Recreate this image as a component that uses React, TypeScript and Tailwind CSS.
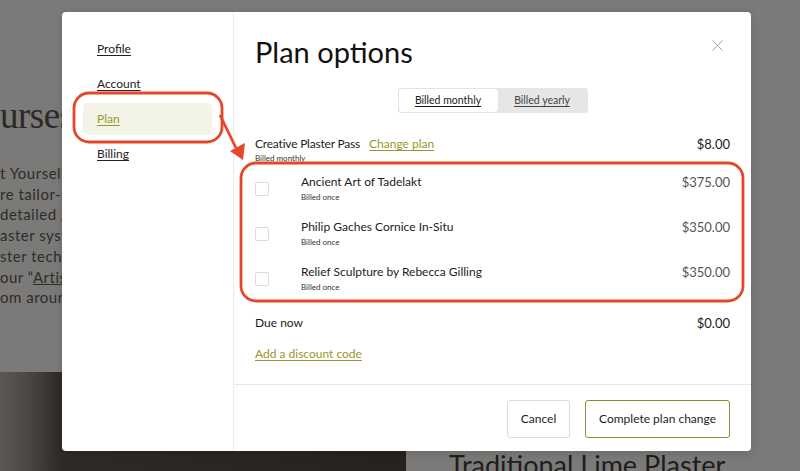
import { X } from 'lucide-react';

const items = [
  { title: 'Ancient Art of Tadelakt', price: '$375.00' },
  { title: 'Philip Gaches Cornice In-Situ', price: '$350.00' },
  { title: 'Relief Sculpture by Rebecca Gilling', price: '$350.00' },
];

const nav = ['Profile', 'Account', 'Plan', 'Billing'];

const pageLines = [
  't Yourself at home',
  're tailor-made',
  'detailed guides',
  'aster systems',
  'ster techniques',
  'our “Artisan”',
  'om around',
];

export default function App() {
  return (
    <div className="relative h-[471px] w-[800px] overflow-hidden bg-[#7b7a78] font-['Lato',sans-serif] text-[#1c1c1c]">
      {/* page underneath the overlay */}
      <div className="flex h-full flex-col">
        <h1 className="pt-[94px] font-['Liberation_Serif',serif] text-[37px] leading-[44px] tracking-[-0.5px] text-[#2a2927]">
          urses
        </h1>
        <div className="mt-[25px] flex flex-col text-[15px] leading-[20.7px] tracking-[0.5px] text-[#2d2c2a]">
          {pageLines.map((l, i) => (
            <span key={i} className="whitespace-nowrap">
              {i === 5 ? (
                <>
                  our “<span className="underline">Artisan</span>”
                </>
              ) : (
                l
              )}
            </span>
          ))}
        </div>
        <div className="mt-auto flex h-[99px]">
          <div className="w-[406px] bg-[linear-gradient(90deg,#5a5855_0px,#4a4744_28px,#2e2a27_60px,#26221f_100%)]" />
          <div className="whitespace-nowrap pl-[43px] pt-[75px] text-[27px] leading-[36px] text-[#1e1d1c]">
            Traditional Lime Plaster
          </div>
        </div>
      </div>

      {/* modal */}
      <div className="absolute left-[62px] top-[12px] flex h-[439px] w-[689px] overflow-hidden rounded-[4px] bg-white shadow-[0_2px_10px_rgba(0,0,0,0.15)]">
        <nav className="flex w-[172px] flex-col gap-[3px] border-r border-[#ececec] px-[21px] pt-[21px]">
          {nav.map((n) => (
            <a
              key={n}
              className={
                'flex h-[32px] items-center rounded-[5px] px-[14px] text-[12px] underline underline-offset-2 ' +
                (n === 'Plan' ? 'bg-[#f4f3e8] text-[#97972c]' : 'text-[#222]')
              }
            >
              {n}
            </a>
          ))}
        </nav>

        <div className="relative flex flex-1 flex-col">
          <button className="absolute right-[24px] top-[24px] text-[#9a9a9a]">
            <X size={19} strokeWidth={1.2} />
          </button>
          <div className="px-[21px]">
            <h2 className="pt-[22px] text-[29px] leading-[36px] text-[#111]">Plan options</h2>

            <div className="mt-[18px] flex justify-center">
              <div className="flex h-[25px] rounded-[3px] bg-[#e6e6e6] p-[1px] text-[10.5px]">
                <span className="flex w-[99px] items-center justify-center rounded-[3px] bg-white underline underline-offset-2 shadow-[0_0_1px_rgba(0,0,0,0.15)]">
                  Billed monthly
                </span>
                <span className="flex w-[89px] items-center justify-center text-[#444] underline underline-offset-2">
                  Billed yearly
                </span>
              </div>
            </div>

            <div className="mt-[23px] flex items-start justify-between">
              <div>
                <div className="flex text-[12px] leading-[16px]">
                  <span className="tracking-[-0.2px]">Creative Plaster Pass</span>
                  <a className="ml-[9px] text-[#97972c] underline underline-offset-2">Change plan</a>
                </div>
                <div className="mt-[1px] text-[8px] leading-[10px] text-[#333]">Billed monthly</div>
              </div>
              <span className="text-[13px] leading-[16px]">$8.00</span>
            </div>

            <div className="mt-[11px] flex flex-col gap-[17px]">
              {items.map((it) => (
                <div key={it.title} className="flex items-start">
                  <span className="mt-[8px] h-[14px] w-[14px] rounded-[2px] border border-[#dcdcdc] bg-white" />
                  <div className="ml-[32px] flex-1">
                    <div className="text-[12px] leading-[16px]">{it.title}</div>
                    <div className="mt-[2px] text-[8px] leading-[10px] text-[#333]">Billed once</div>
                  </div>
                  <span className="text-[13px] leading-[16px] text-[#555]">{it.price}</span>
                </div>
              ))}
            </div>

            <div className="mt-[23px] flex justify-between text-[12px] leading-[16px]">
              <span>Due now</span>
              <span className="text-[13px]">$0.00</span>
            </div>
            <a className="mt-[15px] block text-[12px] leading-[16px] text-[#97972c] underline underline-offset-2">
              Add a discount code
            </a>
          </div>

          <div className="mt-auto flex justify-end gap-[15px] border-t border-[#e8e8e8] px-[21px] pb-[13px] pt-[15px]">
            <button className="h-[38px] w-[63px] rounded-[3px] border border-[#dcdcdc] text-[12px]">Cancel</button>
            <button className="h-[38px] w-[145px] rounded-[3px] border-[1.5px] border-[#8c8c2a] text-[12px]">
              Complete plan change
            </button>
          </div>
        </div>
      </div>

      {/* annotation marks */}
      <svg className="pointer-events-none absolute inset-0" width="800" height="471" viewBox="0 0 800 471">
        <rect x="74" y="93" width="148" height="49" rx="15" fill="none" stroke="#e5472b" strokeWidth="2.8" />
        <rect x="241" y="163" width="502" height="138" rx="15" fill="none" stroke="#e5472b" strokeWidth="2.8" />
        <line x1="220" y1="115" x2="236" y2="148" stroke="#e5472b" strokeWidth="2.8" />
        <polygon points="230,151 245,143 243,160" fill="#e5472b" />
      </svg>
    </div>
  );
}
